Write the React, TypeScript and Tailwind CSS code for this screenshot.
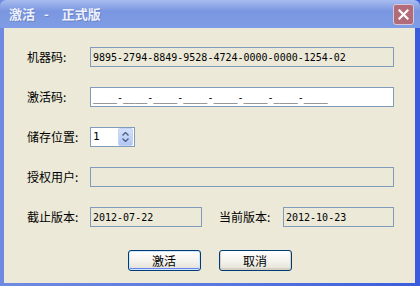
import React from "react";

const cjk = { fontFamily: '"Noto Sans CJK SC", "Liberation Sans", sans-serif' };
const mono = { fontFamily: '"DejaVu Sans Mono", "Liberation Mono", monospace' };

function Label({ children, w = "w-[63px]" }: { children: React.ReactNode; w?: string }) {
  return (
    <span className={`${w} shrink-0 text-[12px] leading-none text-black`} style={cjk}>
      {children}
    </span>
  );
}

function Field({ value, className = "", white = false }: { value?: string; className?: string; white?: boolean }) {
  return (
    <div
      className={`h-[20px] border border-[#7f9db9] flex items-center pl-[2px] text-[10px] text-black ${
        white ? "bg-white" : "bg-[#ece9d8]"
      } ${className}`}
      style={mono}
    >
      {value}
    </div>
  );
}

function XpButton({ label, isDefault }: { label: string; isDefault?: boolean }) {
  return (
    <button
      className={`w-[73px] h-[21px] rounded-[3px] border border-[#003c74] bg-gradient-to-b from-white via-[#f4f3ee] to-[#e3e1d6] text-[12px] text-black leading-none ${
        isDefault ? "shadow-[inset_0_0_0_1px_#cee7ff,inset_0_-1px_0_1px_#6982ee]" : "shadow-[inset_0_-1px_0_1px_#d6d0c5]"
      }`}
      style={cjk}
    >
      {label}
    </button>
  );
}

export default function App() {
  const code = Array.from({ length: 8 }, () => "____").join("-");
  return (
    <div className="w-[420px] h-[286px] flex flex-col bg-gradient-to-r from-[#6f8ae0] via-[#5a78e0] to-[#3a5cdc] overflow-hidden">
      {/* title bar */}
      <div className="h-[28px] shrink-0 flex items-center justify-between pl-[9px] pr-[6px] bg-gradient-to-b from-[#a8bcef] via-[#7a96e0] via-40% to-[#7f9de6] rounded-t-[6px]">
        <div
          className="flex items-center text-[13px] font-bold text-[#eef1fb] [text-shadow:1px_1px_0_#6a84c8]"
          style={cjk}
        >
          <span>激活</span>
          <span className="ml-[9px] mr-[13px]">-</span>
          <span>正式版</span>
        </div>
        <div className="w-[21px] h-[21px] rounded-[3px] border border-[#d8c8d6] bg-[#b26b78] flex items-center justify-center">
          <svg width="11" height="11" viewBox="0 0 11 11">
            <path d="M1.5 1.5 L9.5 9.5 M9.5 1.5 L1.5 9.5" stroke="#ffffff" strokeWidth="2.2" strokeLinecap="square" />
          </svg>
        </div>
      </div>

      {/* client area */}
      <div className="flex-1 mx-[4px] mr-[5px] mb-[3px] bg-[#ece9d8] flex flex-col pl-[23px] pr-[21px] pt-[19px]">
        <div className="flex items-center h-[20px]">
          <Label>机器码:</Label>
          <Field className="flex-1" value="9895-2794-8849-9528-4724-0000-0000-1254-02" />
        </div>

        <div className="flex items-center h-[20px] mt-[20px]">
          <Label>激活码:</Label>
          <Field className="flex-1" white value={code} />
        </div>

        <div className="flex items-center h-[20px] mt-[20px]">
          <Label>储存位置:</Label>
          <div className="w-[45px] h-[20px] border border-[#7f9db9] bg-white flex items-center justify-between">
            <span className="pl-[2px] text-[11px] text-black" style={mono}>
              1
            </span>
            <div className="w-[15px] h-[18px] mr-[1px] rounded-[2px] bg-gradient-to-b from-[#d4e0fb] to-[#b2c6f4] border border-[#c5d3f5] flex flex-col items-center justify-center gap-[2px]">
              <svg width="7" height="4" viewBox="0 0 7 4">
                <path d="M0.5 3.5 L3.5 0.5 L6.5 3.5" stroke="#4d6185" strokeWidth="1.4" fill="none" />
              </svg>
              <svg width="7" height="4" viewBox="0 0 7 4">
                <path d="M0.5 0.5 L3.5 3.5 L6.5 0.5" stroke="#4d6185" strokeWidth="1.4" fill="none" />
              </svg>
            </div>
          </div>
        </div>

        <div className="flex items-center h-[20px] mt-[20px]">
          <Label>授权用户:</Label>
          <Field className="flex-1" />
        </div>

        <div className="flex items-center h-[20px] mt-[20px]">
          <Label>截止版本:</Label>
          <Field className="w-[112px]" value="2012-07-22" />
          <span className="w-[17px]" />
          <Label w="w-[64px]">当前版本:</Label>
          <Field className="flex-1" value="2012-10-23" />
        </div>

        <div className="flex justify-center gap-[18px] mt-[23px] pr-[2px]">
          <XpButton label="激活" isDefault />
          <XpButton label="取消" />
        </div>
      </div>
    </div>
  );
}
